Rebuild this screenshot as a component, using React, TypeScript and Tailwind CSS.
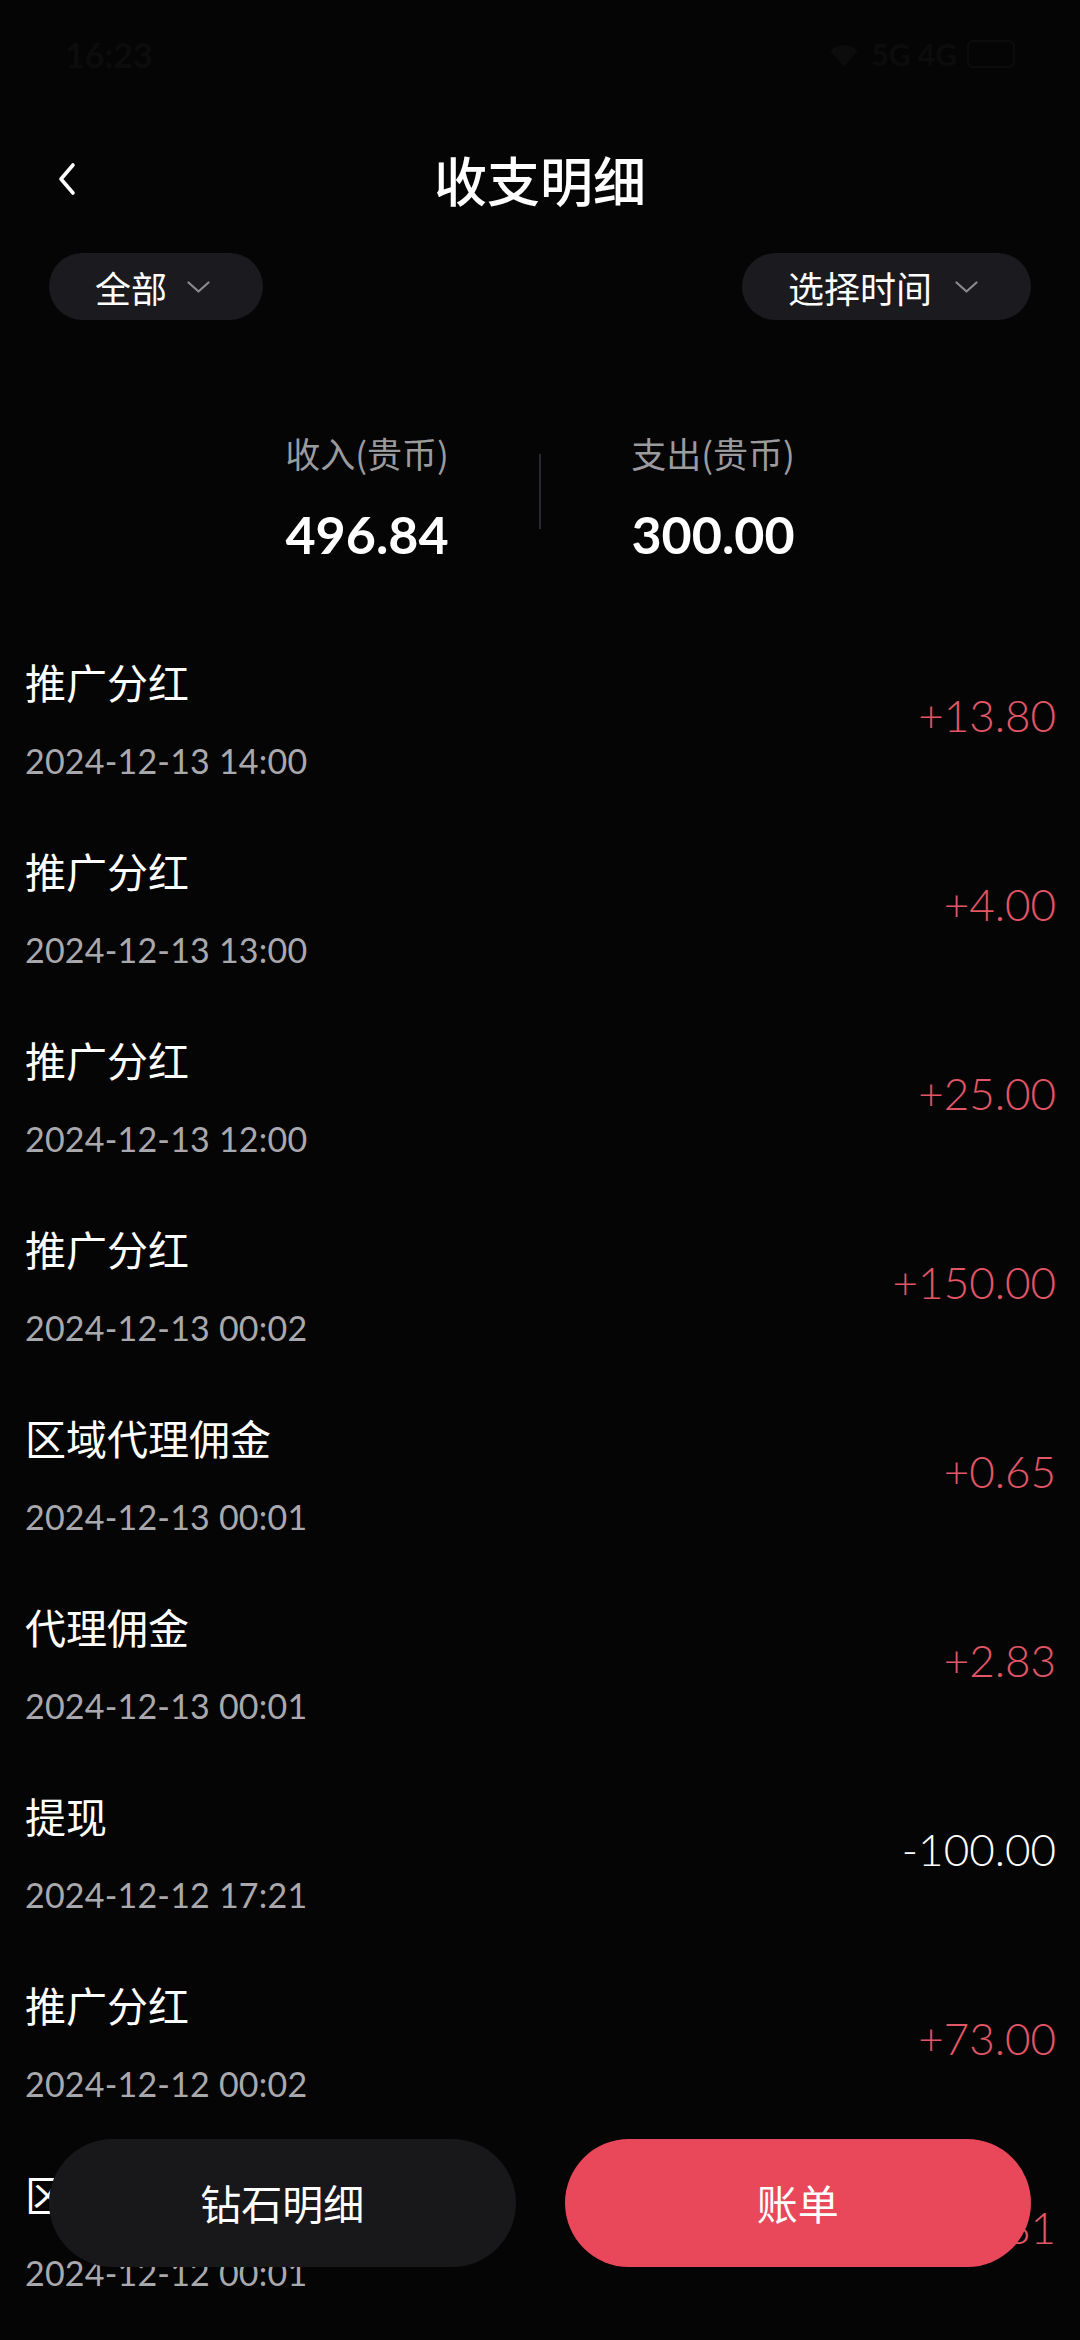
import React from "react";

type Record = {
  title: string;
  time: string;
  amount: string;
};

const records: Record[] = [
  { title: "推广分红", time: "2024-12-13 14:00", amount: "+13.80" },
  { title: "推广分红", time: "2024-12-13 13:00", amount: "+4.00" },
  { title: "推广分红", time: "2024-12-13 12:00", amount: "+25.00" },
  { title: "推广分红", time: "2024-12-13 00:02", amount: "+150.00" },
  { title: "区域代理佣金", time: "2024-12-13 00:01", amount: "+0.65" },
  { title: "代理佣金", time: "2024-12-13 00:01", amount: "+2.83" },
  { title: "提现", time: "2024-12-12 17:21", amount: "-100.00" },
  { title: "推广分红", time: "2024-12-12 00:02", amount: "+73.00" },
  { title: "区域代理佣金", time: "2024-12-12 00:01", amount: "+0.81" },
];

const cjk = "font-['Noto_Sans_CJK_SC',sans-serif]";
const num = "font-['Lato','Noto_Sans_CJK_SC',sans-serif]";

const ChevronDown = () => (
  <svg width="23" height="12" viewBox="0 0 23 12" fill="none">
    <polyline points="1.5,1.5 11.5,10.5 21.5,1.5" stroke="#8a8a8e" strokeWidth="2.2" strokeLinecap="round" strokeLinejoin="round" />
  </svg>
);

const FilterPill = ({ label, gap }: { label: string; gap: string }) => (
  <button className={`flex h-[67px] items-center rounded-full bg-[#1b1b1f] pl-[46px] pr-[53px] ${gap}`}>
    <span className={`${cjk} text-[36px] leading-none text-white`}>{label}</span>
    <ChevronDown />
  </button>
);

const Summary = ({ label, value }: { label: string; value: string }) => (
  <div className="flex w-[260px] flex-col items-center">
    <span className={`${cjk} text-[35px] leading-[44px] text-[#9b9b9f]`}>{label}</span>
    <span className={`${num} mt-[31px] text-[52px] font-bold leading-[56px] text-white`}>{value}</span>
  </div>
);

const RecordRow = ({ item }: { item: Record }) => {
  const isIncome = item.amount.startsWith("+");
  return (
    <div className="flex items-center justify-between pb-[65px]">
      <div className="flex flex-col">
        <span className={`${cjk} text-[41px] leading-[48px] text-white`}>{item.title}</span>
        <span className={`${num} mt-[36px] text-[34px] leading-[40px] tracking-[0.2px] text-[#a9a9ad]`}>{item.time}</span>
      </div>
      <span
        className={`${num} mb-[9px] text-[44px] font-light leading-[52px] ${
          isIncome ? "text-[#e25666]" : "text-white"
        }`}
      >
        {item.amount}
      </span>
    </div>
  );
};

export default function App() {
  return (
    <div className="relative h-[2340px] w-[1080px] overflow-hidden bg-[#050505]">
      {/* status bar */}
      <div className="flex h-[108px] items-center justify-between px-[65px] text-[#0c0c0c]">
        <span className={`${num} text-[34px] font-bold`}>16:23</span>
        <div className="flex items-center gap-[10px]">
          <svg width="34" height="26" viewBox="0 0 34 26" fill="#0c0c0c">
            <path d="M17 26 L3 10 A20 20 0 0 1 31 10 Z" />
          </svg>
          <span className={`${num} text-[30px] font-bold`}>5G 4G</span>
          <div className="h-[28px] w-[48px] rounded-[6px] border-2 border-[#0c0c0c]" />
        </div>
      </div>

      {/* header */}
      <div className="grid h-[142px] grid-cols-[1fr_auto_1fr] items-center px-[56px]">
        <button className="flex h-[40px] w-[30px] items-center justify-start">
          <svg width="22" height="34" viewBox="0 0 22 34" fill="none">
            <polyline points="17,3 5,17 17,31" stroke="#ffffff" strokeWidth="3.6" strokeLinecap="round" strokeLinejoin="round" />
          </svg>
        </button>
        <h1 className={`${cjk} text-[53px] font-medium leading-none text-white`}>收支明细</h1>
        <div />
      </div>

      {/* filters */}
      <div className="mt-[3px] flex items-center justify-between px-[49px]">
        <FilterPill label="全部" gap="gap-[20px]" />
        <FilterPill label="选择时间" gap="gap-[23px]" />
      </div>

      {/* summary */}
      <div className="mt-[111px] flex items-center justify-center">
        <Summary label="收入(贵币)" value="496.84" />
        <div className="mx-[42px] mb-[10px] h-[75px] w-[2px] bg-[#2a2a2e]" />
        <Summary label="支出(贵币)" value="300.00" />
      </div>

      {/* records */}
      <div className="mt-[95px] flex flex-col pl-[25px] pr-[24px]">
        {records.map((item, i) => (
          <RecordRow key={i} item={item} />
        ))}
      </div>

      {/* bottom actions */}
      <div className="absolute bottom-[73px] left-[49px] right-[49px] flex gap-[49px]">
        <button className={`${cjk} flex h-[128px] flex-1 items-center justify-center rounded-full bg-[#18181b] text-[41px] text-white`}>
          钻石明细
        </button>
        <button className={`${cjk} flex h-[128px] flex-1 items-center justify-center rounded-full bg-[#e8485a] text-[41px] text-white`}>
          账单
        </button>
      </div>
    </div>
  );
}
